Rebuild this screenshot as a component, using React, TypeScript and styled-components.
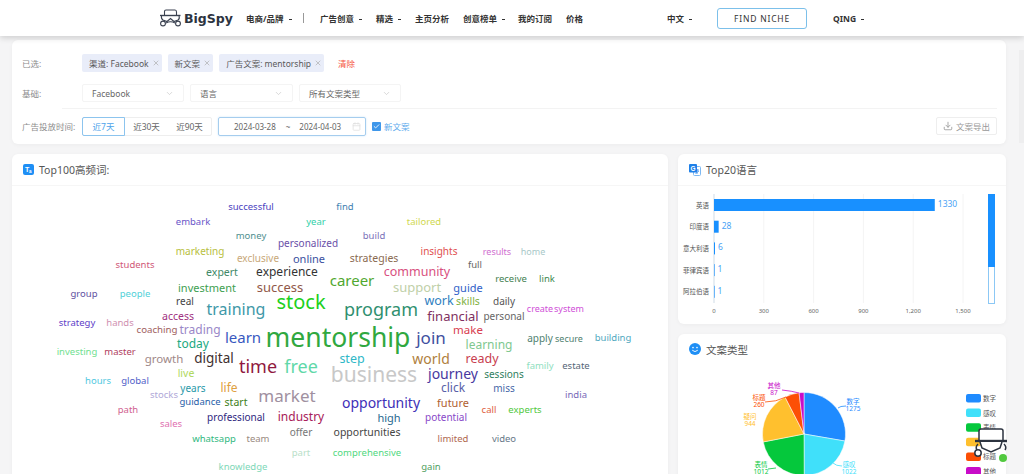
import styled, { createGlobalStyle } from "styled-components";
import { X, ChevronDown, Calendar, Download, Check } from "lucide-react";

const GlobalStyle = createGlobalStyle`
  html, body {
    margin: 0;
    height: 100%;
    overflow: hidden;
    background: #f5f5f6;
    font-family: "Noto Sans", "Noto Sans CJK SC", sans-serif;
  }
  * { box-sizing: border-box; }
`;

const Page = styled.div`
  width: 1024px;
  height: 474px;
  overflow: hidden;
  position: relative;
`;

const Header = styled.header`
  position: relative;
  z-index: 2;
  height: 36px;
  background: #fff;
  box-shadow: 0 2px 6px rgba(0, 0, 0, 0.16);
  display: flex;
  align-items: center;
  padding-left: 159px;
`;

const Logo = styled.div`
  display: flex;
  align-items: center;
  gap: 3px;
  width: 87px;
  flex: none;
  color: #2c3340;
  font-family: "DejaVu Sans", sans-serif;
  font-weight: 700;
  font-size: 12.5px;
`;

const NavItem = styled.span<{ $w: number }>`
  width: ${(p) => p.$w}px;
  flex: none;
  font-size: 8.5px;
  font-weight: 700;
  color: #333;
  white-space: nowrap;
`;

const Caret = styled.span`
  display: inline-block;
  width: 3px;
  height: 1px;
  background: #333;
  margin-left: 5px;
  vertical-align: middle;
`;

const NavDivider = styled.span`
  width: 1px;
  height: 10px;
  background: #999;
  margin-right: 16px;
  flex: none;
`;

const FindNiche = styled.button`
  width: 90px;
  height: 21px;
  flex: none;
  margin-right: 26px;
  border: 1px solid #7cc0ea;
  border-radius: 3px;
  background: #fff;
  color: #333;
  font-family: inherit;
  font-size: 8.5px;
  letter-spacing: 0.8px;
  padding: 0;
`;

const Content = styled.main`
  padding: 4px 18px 0 12px;
  display: flex;
  flex-direction: column;
  gap: 10px;
`;

const Card = styled.section`
  background: #fff;
  border-radius: 6px;
  box-shadow: 0 1px 4px rgba(0, 0, 0, 0.04);
`;

const FilterCard = styled(Card)`
  height: 104px;
  padding: 14px 9px 0 10px;
  font-size: 8.5px;
  color: #666;
`;

const FilterRow = styled.div`
  display: flex;
  align-items: center;
`;

const TagRow = styled(FilterRow)`
  height: 18px;
  margin-bottom: 12px;
`;

const SelectRow = styled(FilterRow)`
  height: 18px;
`;

const DateRow = styled(FilterRow)`
  height: 35px;
  margin-top: 6px;
  margin-left: 40px;
  border-top: 1px solid #f3f3f3;
`;

const RowLabel = styled.span`
  width: 60px;
  flex: none;
  color: #8c8c8c;
`;

const DateLabel = styled(RowLabel)`
  margin-left: -40px;
  white-space: nowrap;
`;

const Tag = styled.span`
  display: inline-flex;
  align-items: center;
  gap: 3px;
  height: 18px;
  padding: 0 2px 0 7px;
  margin-right: 6px;
  background: #e9edf9;
  border-radius: 2px;
  color: #595959;
  white-space: nowrap;
`;

const ClearLink = styled.span`
  color: #f5553c;
  margin-left: 8px;
`;

const SelectBox = styled.div<{ $w: number }>`
  width: ${(p) => p.$w}px;
  height: 18px;
  margin-right: 6px;
  padding: 0 9px;
  display: flex;
  align-items: center;
  justify-content: space-between;
  border: 1px solid #f4f4f4;
  border-radius: 2px;
  color: #666;
`;

const RangeGroup = styled.div`
  display: flex;
  height: 19px;
  margin-right: 6px;
  border: 1px solid #eee;
  border-radius: 2px;
`;

const RangeButton = styled.span<{ $active?: boolean }>`
  display: flex;
  align-items: center;
  justify-content: center;
  width: 43px;
  margin: ${(p) => (p.$active ? "-1px 0 -1px -1px" : "0")};
  border: 1px solid ${(p) => (p.$active ? "#8cc4ee" : "transparent")};
  border-radius: 2px 0 0 2px;
  color: ${(p) => (p.$active ? "#4da3ea" : "#666")};
`;

const DateBox = styled.div`
  width: 148px;
  height: 19px;
  margin-right: 6px;
  padding: 0 4px 0 15px;
  display: flex;
  align-items: center;
  border: 1px solid #a5cdee;
  border-radius: 2px;
  color: #666;
  font-size: 8px;
  box-shadow: 0 0 2px rgba(60, 150, 230, 0.25);
`;

const DateValue = styled.span`
  white-space: nowrap;
`;

const DateSep = styled.span`
  margin: 0 9px 0 10px;
`;

const CalendarIcon = styled(Calendar)`
  margin-left: auto;
  color: #ddd;
`;

const NewCopy = styled.label`
  display: flex;
  align-items: center;
  gap: 3px;
  color: #5aa9ec;
`;

const CheckMark = styled.span`
  width: 9px;
  height: 9px;
  background: #3f97ea;
  border-radius: 1px;
  color: #fff;
  display: flex;
  align-items: center;
  justify-content: center;
`;

const ExportButton = styled.button`
  margin-left: auto;
  width: 61px;
  height: 18px;
  border: 1px solid #eee;
  border-radius: 2px;
  background: #fff;
  color: #999;
  font-family: inherit;
  font-size: 8.5px;
  display: flex;
  align-items: center;
  justify-content: center;
  gap: 3px;
  padding: 0;
`;

const Columns = styled.div`
  display: flex;
  gap: 10px;
  align-items: flex-start;
`;

const CloudCard = styled(Card)`
  width: 656px;
  height: 340px;
`;

const SideColumn = styled.div`
  width: 328px;
  display: flex;
  flex-direction: column;
  gap: 10px;
`;

const CardTitle = styled.div`
  height: 32px;
  display: flex;
  align-items: center;
  gap: 5px;
  padding-left: 11px;
  font-size: 10.5px;
  color: #555;
  border-bottom: 1px solid #f6f6f6;
`;

const PlainTitle = styled(CardTitle)`
  height: 30px;
  border-bottom: none;
  margin-bottom: 2px;
`;

const Cloud = styled.div`
  position: relative;
  height: 308px;
`;

const Word = styled.span<{ $size: number; $color: string }>`
  position: absolute;
  transform: translate(-50%, -50%);
  font-size: ${(p) => p.$size}px;
  color: ${(p) => p.$color};
  line-height: 1;
  white-space: nowrap;
`;

const ChartCard = styled(Card)`
  height: 170px;
`;

const PieCard = styled(Card)`
  height: 200px;
`;

const ChartSvg = styled.svg`
  display: block;
`;

const ChartText = styled.text`
  font-family: "Noto Sans", "Noto Sans CJK SC", sans-serif;
`;

const BadgeText = styled.text`
  font-family: "Liberation Sans", sans-serif;
  font-weight: 700;
`;

const Helper = styled.svg`
  position: absolute;
  left: 973px;
  top: 426px;
`;

const ScrollStrip = styled.div`
  position: absolute;
  right: 0;
  top: 50px;
  width: 5px;
  height: 93px;
  background: #eeeeef;
`;

type WordDatum = [string, number, number, number, string];

// page coordinates of the word centres, [text, x, y, size, colour]
const words: WordDatum[] = [
  ["successful", 251, 207, 9.5, "#4b3fc0"],
  ["find", 345, 207, 9.5, "#3f7fb0"],
  ["embark", 193, 222, 9.5, "#6a55c8"],
  ["year", 316, 222, 9.5, "#2fd0a8"],
  ["tailored", 424, 222, 9.5, "#d0d850"],
  ["money", 251, 236, 9.5, "#4f8f8f"],
  ["build", 374, 236, 9.5, "#7a70b8"],
  ["personalized", 308, 243, 10, "#6a4fa8"],
  ["marketing", 200, 251, 10, "#b8c040"],
  ["insights", 439, 251, 10, "#e05050"],
  ["results", 497, 251, 9, "#d070d0"],
  ["home", 533, 251, 9, "#a8c8c8"],
  ["exclusive", 258, 258, 10, "#c8a878"],
  ["online", 309, 258, 11, "#3a50a0"],
  ["strategies", 374, 258, 10.5, "#8a6a50"],
  ["full", 475, 265, 9.5, "#666666"],
  ["students", 135, 265, 9.5, "#d05878"],
  ["expert", 222, 272, 10.5, "#408868"],
  ["experience", 287, 272, 12, "#333333"],
  ["community", 417, 272, 12.5, "#d85080"],
  ["career", 352, 280, 15, "#50a830"],
  ["receive", 511, 279, 9.5, "#3f8050"],
  ["link", 547, 279, 9.5, "#408850"],
  ["investment", 207, 287, 11, "#40a050"],
  ["success", 280, 287, 13, "#905848"],
  ["support", 417, 287, 13, "#c0d0a8"],
  ["guide", 468, 287, 11, "#3060c8"],
  ["group", 84, 294, 9.5, "#6050a0"],
  ["people", 135, 294, 9.5, "#50d0d8"],
  ["real", 185, 301, 10, "#444444"],
  ["training", 236, 309, 16, "#4098a8"],
  ["stock", 301, 302, 20, "#20d020"],
  ["program", 381, 309, 18, "#309070"],
  ["work", 439, 301, 12.5, "#3080c0"],
  ["skills", 468, 301, 10.5, "#80b040"],
  ["daily", 504, 301, 10, "#555555"],
  ["create", 540, 308, 9, "#d050d8"],
  ["system", 569, 308, 9, "#d050d8"],
  ["financial", 453, 316, 13, "#803060"],
  ["personal", 504, 316, 10, "#666666"],
  ["access", 178, 316, 10.5, "#a03080"],
  ["strategy", 77, 323, 9.5, "#6040c8"],
  ["hands", 120, 323, 9.5, "#d090b0"],
  ["coaching", 157, 330, 9.7, "#a06060"],
  ["trading", 200, 330, 12, "#9a88c8"],
  ["learn", 243, 337, 15, "#3858c0"],
  ["mentorship", 338, 337, 26.5, "#30a840"],
  ["join", 431, 337, 17, "#4050a0"],
  ["make", 468, 330, 11.5, "#d84050"],
  ["apply", 540, 338, 10, "#4f7f70"],
  ["secure", 569, 338, 9, "#4f7f70"],
  ["building", 613, 338, 9.5, "#50a8c0"],
  ["learning", 489, 345, 12, "#80c890"],
  ["today", 193, 344, 12, "#20a880"],
  ["master", 120, 352, 9.5, "#b04060"],
  ["investing", 77, 352, 9.5, "#70e090"],
  ["growth", 164, 359, 11.5, "#a08888"],
  ["digital", 214, 359, 13.5, "#403030"],
  ["time", 258, 366, 18, "#901840"],
  ["free", 301, 366, 18, "#60d8a8"],
  ["step", 352, 359, 12.5, "#30b8c8"],
  ["world", 431, 359, 14, "#b08040"],
  ["ready", 482, 359, 12.5, "#c84050"],
  ["family", 540, 366, 9.5, "#90e0c0"],
  ["estate", 576, 366, 9.5, "#556677"],
  ["business", 374, 374, 21, "#c8c8c8"],
  ["journey", 453, 374, 14, "#4838a0"],
  ["sessions", 504, 374, 10, "#308060"],
  ["live", 186, 373, 10.5, "#b0d860"],
  ["hours", 98, 381, 9.5, "#50c8e0"],
  ["global", 135, 381, 9.5, "#5060c8"],
  ["years", 193, 388, 10, "#2898a8"],
  ["life", 229, 388, 12, "#e0a040"],
  ["click", 453, 388, 12, "#5860a8"],
  ["miss", 504, 388, 10, "#4868a8"],
  ["stocks", 164, 395, 9.5, "#b0a8d8"],
  ["guidance", 200, 402, 9.5, "#2860a8"],
  ["start", 236, 402, 10.5, "#408020"],
  ["market", 287, 395, 17, "#a090a0"],
  ["opportunity", 381, 403, 14, "#4030b8"],
  ["future", 453, 402, 11, "#b06030"],
  ["india", 576, 395, 9.5, "#7868b8"],
  ["path", 128, 410, 9.5, "#d06090"],
  ["call", 489, 410, 9.5, "#e06040"],
  ["experts", 525, 410, 9.5, "#50c840"],
  ["professional", 236, 417, 10, "#302880"],
  ["industry", 301, 417, 12, "#a82058"],
  ["high", 389, 417, 11, "#286890"],
  ["potential", 446, 417, 10, "#8848c8"],
  ["sales", 171, 424, 9.5, "#e070b0"],
  ["offer", 301, 432, 10, "#777777"],
  ["opportunities", 367, 432, 10.5, "#444444"],
  ["whatsapp", 214, 439, 9.5, "#30b880"],
  ["team", 258, 439, 9.5, "#9a8a80"],
  ["limited", 453, 439, 9.5, "#b06850"],
  ["video", 504, 439, 9.5, "#667788"],
  ["part", 301, 453, 9.5, "#b8e0c8"],
  ["comprehensive", 367, 453, 9.5, "#50d880"],
  ["knowledge", 243, 467, 9.5, "#80d8b8"],
  ["gain", 431, 467, 9.5, "#50a060"],
];

const languages = [
  { name: "英语", value: 1330 },
  { name: "印度语", value: 28 },
  { name: "意大利语", value: 6 },
  { name: "菲律宾语", value: 1 },
  { name: "阿拉伯语", value: 1 },
];

const ticks = [0, 300, 600, 900, 1200, 1500];

// chart coordinates are relative to the svg, which starts at page x 678
const axisX = 36;
const scaleX = (v: number) => axisX + (v / 1500) * 249;

function LanguageChart() {
  return (
    <ChartSvg width={328} height={138}>
      {ticks.slice(1).map((t) => (
        <line key={t} x1={scaleX(t)} x2={scaleX(t)} y1={8} y2={117} stroke="#f4f4f4" />
      ))}
      <line x1={axisX} x2={axisX} y1={8} y2={117} stroke="#cfdbe6" />
      {languages.map((l, i) => {
        const y = 19 + i * 21.7;
        const w = Math.max((l.value / 1500) * 249, 0.6);
        return (
          <g key={l.name}>
            <ChartText x={31} y={y + 2.5} fontSize={6.5} textAnchor="end" fill="#555">
              {l.name}
            </ChartText>
            <rect x={axisX} y={y - 6} width={w} height={12} fill="#1890ff" />
            <ChartText x={axisX + w + 3} y={y + 2} fontSize={8.5} fill="#4aa3f5">
              {l.value}
            </ChartText>
          </g>
        );
      })}
      {ticks.map((t) => (
        <ChartText key={t} x={scaleX(t)} y={127} fontSize={6} textAnchor="middle" fill="#666">
          {t.toLocaleString("en-US")}
        </ChartText>
      ))}
      <rect x={310.5} y={8.5} width={6} height={109} fill="#fff" stroke="#8cc8f5" />
      <rect x={310} y={8} width={7} height={73} fill="#1890ff" />
    </ChartSvg>
  );
}

const slices = [
  { name: "数字", value: 1275, color: "#1f8bff" },
  { name: "感叹", value: 1022, color: "#40e0fa" },
  { name: "表情", value: 1012, color: "#05c83c" },
  { name: "疑问", value: 944, color: "#ffc02e" },
  { name: "标题", value: 260, color: "#fc4f05" },
  { name: "其他", value: 87, color: "#c80cc8" },
];

function slicePath(cx: number, cy: number, r: number, a0: number, a1: number) {
  const p = (a: number) => `${cx + r * Math.sin(a)} ${cy - r * Math.cos(a)}`;
  return `M${cx} ${cy} L${p(a0)} A${r} ${r} 0 ${a1 - a0 > Math.PI ? 1 : 0} 1 ${p(a1)} Z`;
}

function TypePie() {
  const total = slices.reduce((s, d) => s + d.value, 0);
  const cx = 126;
  const cy = 68;
  const r = 41.5;
  let angle = 0;
  const labels = [
    { x: 175, y: 38, line: "M160 42 Q162 40 168 40" },
    { x: 171, y: 101, line: "M155 97 Q158 100 164 100" },
    { x: 83, y: 101, line: "M90 103 L98 102" },
    { x: 72, y: 53, line: "" },
    { x: 81, y: 34, line: "M87 36 Q98 36 108 31" },
    { x: 96, y: 22, line: "M104 24 Q114 25 121 27" },
  ];
  return (
    <ChartSvg width={328} height={168}>
      {slices.map((s, i) => {
        const a0 = angle;
        angle += (s.value / total) * Math.PI * 2;
        const lab = labels[i];
        return (
          <g key={s.name}>
            <path d={slicePath(cx, cy, r, a0, angle)} fill={s.color} stroke="#fff" strokeWidth={0.5} />
            {lab.line && <path d={lab.line} fill="none" stroke={s.color} strokeWidth={0.8} />}
            <ChartText x={lab.x} y={lab.y} fontSize={6.5} fill={s.color} textAnchor="middle">
              {s.name}
            </ChartText>
            <ChartText x={lab.x} y={lab.y + 6.5} fontSize={6.5} fill={s.color} textAnchor="middle">
              {s.value}
            </ChartText>
          </g>
        );
      })}
      {slices.map((s, i) => {
        const y = 28 + i * 14.6;
        return (
          <g key={s.name}>
            <rect x={288} y={y} width={15} height={8.5} rx={2} fill={s.color} />
            <ChartText x={305} y={y + 7} fontSize={6.5} fill="#555">
              {s.name}
            </ChartText>
          </g>
        );
      })}
    </ChartSvg>
  );
}

function TextIcon() {
  return (
    <svg width="11" height="11" viewBox="0 0 11 11">
      <rect width="11" height="11" rx="2" fill="#1f8ff5" />
      <BadgeText x="2" y="8" fontSize="7" fill="#fff">
        T
      </BadgeText>
      <BadgeText x="6" y="9" fontSize="4.5" fill="#fff">
        a
      </BadgeText>
    </svg>
  );
}

function TranslateIcon() {
  return (
    <svg width="12" height="12" viewBox="0 0 12 12">
      <rect x="4.5" y="2.5" width="7" height="9" rx="1" fill="#fff" stroke="#7db8f2" />
      <rect width="8" height="8.5" rx="1" fill="#1f80e8" />
      <BadgeText x="1.5" y="7" fontSize="6.5" fill="#fff">
        G
      </BadgeText>
      <path d="M6.5 6 H10 M8 5 V10 M6.5 9.5 L10 7" stroke="#1f80e8" strokeWidth="0.7" fill="none" />
    </svg>
  );
}

function SmileIcon() {
  return (
    <svg width="12" height="12" viewBox="0 0 12 12">
      <circle cx="6" cy="6" r="6" fill="#1f8ff5" />
      <circle cx="4" cy="4.6" r="0.8" fill="#fff" />
      <circle cx="8" cy="4.6" r="0.8" fill="#fff" />
      <path d="M3.2 7.2 Q6 10 8.8 7.2" stroke="#fff" strokeWidth="0.9" fill="none" />
    </svg>
  );
}

function CarIcon() {
  return (
    <svg width="22" height="18" viewBox="0 0 22 18" fill="none" stroke="#3a4150" strokeWidth="1.1">
      <path d="M5.5 6 V2.5 Q5.5 1 7 1 H16 Q17.5 1 17.5 3 V6" />
      <path d="M1 6.5 H21.5" strokeWidth="1.4" />
      <path d="M2.5 7 Q2 10 4 11 L8 12.5 L11.5 9.5 L15 12.5 L19 11 Q21 10 20 7" />
      <circle cx="4" cy="14.5" r="2.4" />
      <circle cx="19" cy="14.5" r="2.4" />
      <path d="M7 14 Q11.5 11.5 16 14" />
    </svg>
  );
}

export default function App() {
  return (
    <Page>
      <GlobalStyle />
      <Header>
        <Logo>
          <CarIcon />
          BigSpy
        </Logo>
        <NavItem $w={57}>
          电商/品牌<Caret />
        </NavItem>
        <NavDivider />
        <NavItem $w={56}>
          广告创意<Caret />
        </NavItem>
        <NavItem $w={39}>
          精选<Caret />
        </NavItem>
        <NavItem $w={48}>主页分析</NavItem>
        <NavItem $w={55}>
          创意榜单<Caret />
        </NavItem>
        <NavItem $w={48}>我的订阅</NavItem>
        <NavItem $w={101}>价格</NavItem>
        <NavItem $w={50}>
          中文<Caret />
        </NavItem>
        <FindNiche>FIND NICHE</FindNiche>
        <NavItem $w={40}>
          QING<Caret />
        </NavItem>
      </Header>
      <ScrollStrip />
      <Content>
        <FilterCard>
          <TagRow>
            <RowLabel>已选:</RowLabel>
            <Tag>
              渠道: Facebook <X size={8} color="#aaa" />
            </Tag>
            <Tag>
              新文案 <X size={8} color="#aaa" />
            </Tag>
            <Tag>
              广告文案: mentorship <X size={8} color="#aaa" />
            </Tag>
            <ClearLink>清除</ClearLink>
          </TagRow>
          <SelectRow>
            <RowLabel>基础:</RowLabel>
            <SelectBox $w={102}>
              Facebook <ChevronDown size={9} color="#ccc" />
            </SelectBox>
            <SelectBox $w={103}>
              语言 <ChevronDown size={9} color="#ccc" />
            </SelectBox>
            <SelectBox $w={102}>
              所有文案类型 <ChevronDown size={9} color="#ccc" />
            </SelectBox>
          </SelectRow>
          <DateRow>
            <DateLabel>广告投放时间:</DateLabel>
            <RangeGroup>
              <RangeButton $active>近7天</RangeButton>
              <RangeButton>近30天</RangeButton>
              <RangeButton>近90天</RangeButton>
            </RangeGroup>
            <DateBox>
              <DateValue>2024-03-28</DateValue>
              <DateSep>~</DateSep>
              <DateValue>2024-04-03</DateValue>
              <CalendarIcon size={9} />
            </DateBox>
            <NewCopy>
              <CheckMark>
                <Check size={7} strokeWidth={3} />
              </CheckMark>
              新文案
            </NewCopy>
            <ExportButton>
              <Download size={10} /> 文案导出
            </ExportButton>
          </DateRow>
        </FilterCard>
        <Columns>
          <CloudCard>
            <CardTitle>
              <TextIcon />
              Top100高频词:
            </CardTitle>
            <Cloud>
              {words.map(([text, x, y, size, color]) => (
                <Word
                  key={text}
                  $size={size}
                  $color={color}
                  style={{ left: x - 12, top: y - 186 }}
                >
                  {text}
                </Word>
              ))}
            </Cloud>
          </CloudCard>
          <SideColumn>
            <ChartCard>
              <CardTitle>
                <TranslateIcon />
                Top20语言
              </CardTitle>
              <LanguageChart />
            </ChartCard>
            <PieCard>
              <PlainTitle>
                <SmileIcon />
                文案类型
              </PlainTitle>
              <TypePie />
            </PieCard>
          </SideColumn>
        </Columns>
      </Content>
      <Helper width="42" height="42" viewBox="0 0 42 42" fill="none" stroke="#2c3340" strokeWidth="1.5">
        <path d="M6 15 V5 Q6 3 8 3 H28 Q30 3 30 5 V15 Z" fill="#fff" />
        <path d="M2 15 H34" strokeWidth="2.4" />
        <path d="M7 16 L9 22 L18 26 L27 22 L29 16" fill="#fff" />
        <path d="M5 18 Q2 21 4 24 M31 18 Q34 21 32 24" />
        <circle cx="5" cy="27" r="3.2" fill="#fff" />
        <circle cx="30" cy="32" r="4" fill="#52c93f" stroke="none" />
      </Helper>
    </Page>
  );
}
